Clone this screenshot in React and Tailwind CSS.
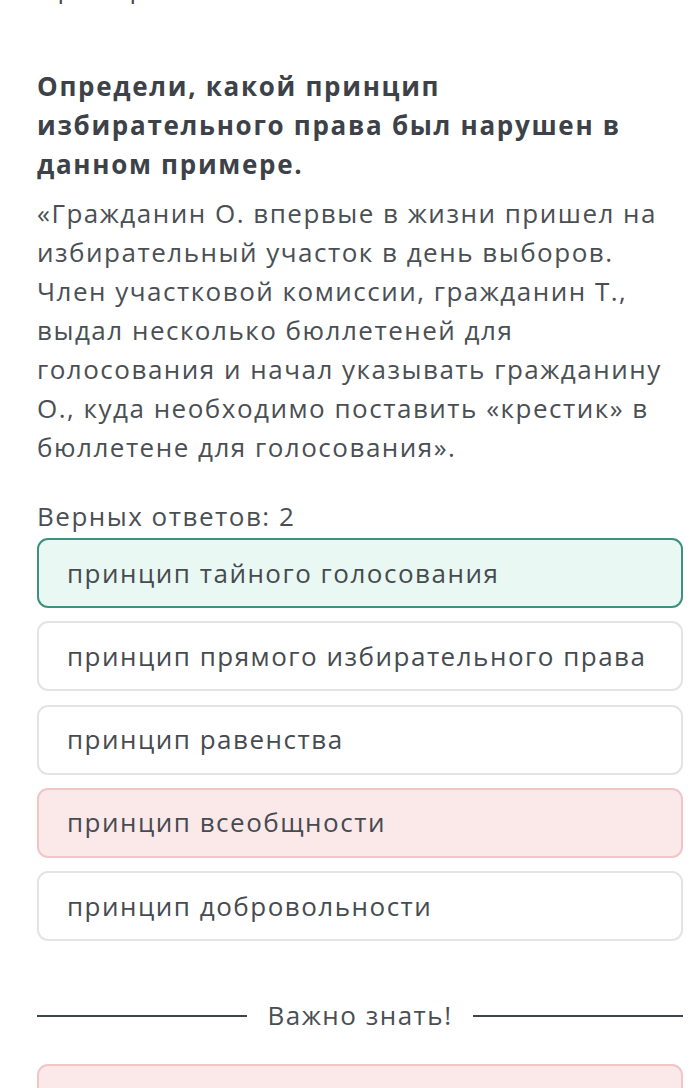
import React from "react";

const options = [
  { text: "принцип тайного голосования", kind: "correct" },
  { text: "принцип прямого избирательного права", kind: "none" },
  { text: "принцип равенства", kind: "none" },
  { text: "принцип всеобщности", kind: "wrong" },
  { text: "принцип добровольности", kind: "none" },
];

function Option({ text, kind }) {
  const cls =
    kind === "correct"
      ? "border-[#3f917f] bg-[#eaf8f3]"
      : kind === "wrong"
      ? "border-[#f1c6c7] bg-[#fbe9ea]"
      : "border-[#e4e4e4] bg-white";
  return (
    <div
      className={`flex h-[70px] items-center whitespace-nowrap rounded-[11px] border-2 pl-[28px] text-[26px] leading-[39px] tracking-[1.5px] text-[#464b50] ${cls}`}
    >
      {text}
    </div>
  );
}

export default function App() {
  return (
    <div
      className="h-[1088px] overflow-hidden bg-white pl-[37px] pr-[11px]"
      style={{ fontFamily: '"Open Sans", "Liberation Sans", sans-serif' }}
    >
      <div className="mt-[-31px] h-[38px] text-[26px] leading-[39px] tracking-[1.5px] text-[#464b50]">
        Пример
      </div>
      <h2 className="mt-[60px] w-[633px] text-[26px] font-bold leading-[39px] tracking-[1.7px] text-[#3d4248]">
        Определи, какой принцип избирательного права был нарушен в данном
        примере.
      </h2>
      <p className="mt-[10px] w-[633px] text-[26px] leading-[39px] tracking-[1.5px] text-[#4a4f54]">
        «Гражданин О. впервые в жизни пришел на избирательный участок в день
        выборов. Член участковой комиссии, гражданин Т., выдал несколько
        бюллетеней для голосования и начал указывать гражданину О., куда
        необходимо поставить «крестик» в бюллетене для голосования».
      </p>
      <div className="mt-[30px] text-[26px] leading-[39px] tracking-[1.5px] text-[#4a4f54]">
        Верных ответов: 2
      </div>
      <div className="mt-[2px] flex flex-col gap-[13.25px]">
        {options.map((o) => (
          <Option key={o.text} {...o} />
        ))}
      </div>
      <div className="mt-[55px] flex items-center gap-[20px]">
        <div className="h-[2px] flex-1 bg-[#3e4548]" />
        <span className="text-[26px] leading-[39px] tracking-[1.5px] text-[#4a4f54]">
          Важно знать!
        </span>
        <div className="h-[2px] flex-1 bg-[#3e4548]" />
      </div>
      <div className="mt-[29px] h-[80px] rounded-t-[11px] border-2 border-[#f1c6c7] bg-[#fbe9ea]" />
    </div>
  );
}
